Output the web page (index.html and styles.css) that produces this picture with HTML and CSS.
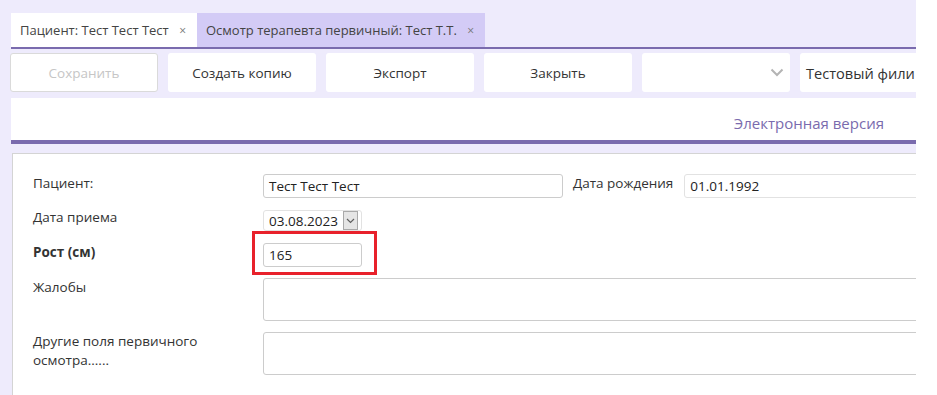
FILE: index.html
```html
<!DOCTYPE html>
<html lang="ru">
<head>
<meta charset="utf-8">
<title>Осмотр терапевта</title>
<link rel="stylesheet" href="styles.css">
</head>
<body>
<div class="app">
  <div class="tabs">
    <div class="tab tab-active"><span class="tab-title">Пациент: Тест Тест Тест</span><span class="tab-x">×</span></div>
    <div class="tab tab-current"><span class="tab-title">Осмотр терапевта первичный: Тест Т.Т.</span><span class="tab-x">×</span></div>
  </div>
  <div class="toolbar">
    <div class="btn btn-disabled">Сохранить</div>
    <div class="btn">Создать копию</div>
    <div class="btn">Экспорт</div>
    <div class="btn">Закрыть</div>
    <div class="btn btn-select">
      <svg class="chev" width="14" height="9" viewBox="0 0 14 9"><path d="M1.5 1.5 L7 7 L12.5 1.5" fill="none" stroke="#b4b4b4" stroke-width="2"/></svg>
    </div>
    <div class="btn btn-branch">Тестовый фили</div>
  </div>
  <div class="header"><span class="header-title">Электронная версия</span></div>
  <div class="form">
    <div class="row">
      <div class="label">Пациент:</div>
      <div class="input input-name">Тест Тест Тест</div>
      <div class="label label-inline">Дата рождения</div>
      <div class="input input-birth">01.01.1992</div>
    </div>
    <div class="row row-date">
      <div class="label">Дата приема</div>
      <div class="input input-date">
        <span>03.08.2023</span>
        <span class="date-btn"><svg width="9" height="6" viewBox="0 0 9 6"><path d="M1 1 L4.5 4.5 L8 1" fill="none" stroke="#606060" stroke-width="1.2"/></svg></span>
      </div>
    </div>
    <div class="row row-height">
      <div class="label label-bold">Рост (см)</div>
      <div class="mark-wrap">
        <div class="input input-height">165</div>
        <div class="mark"></div>
      </div>
    </div>
    <div class="row row-area">
      <div class="label">Жалобы</div>
      <div class="textarea"></div>
    </div>
    <div class="row row-area">
      <div class="label">Другие поля первичного осмотра......</div>
      <div class="textarea"></div>
    </div>
  </div>
</div>
</body>
</html>
```
FILE: styles.css
```css
html, body {
  margin: 0;
  padding: 0;
  background: #ffffff;
}
body {
  font-family: "Open Sans", "Noto Sans", sans-serif;
  font-size: 13px;
  color: #333333;
}
.app {
  width: 916px;
  height: 395px;
  overflow: hidden;
  background: #eeebfc;
  padding-left: 10px;
  padding-top: 13px;
  box-sizing: border-box;
}
.tabs {
  display: flex;
  margin-left: 1px;
  height: 34px;
  border-bottom: 2px solid #7a6bae;
  width: 2000px;
}
.tab {
  display: flex;
  align-items: center;
  padding-left: 9px;
  padding-right: 11px;
  color: #444444;
  font-size: 13px;
}
.tab-active {
  background: #ffffff;
  width: 186px;
  box-sizing: border-box;
}
.tab-current {
  background: #d3cbf6;
  width: 288px;
  box-sizing: border-box;
}
.tab-title {
  flex: 1;
  white-space: nowrap;
}
.tab-x {
  color: #777777;
  font-size: 12px;
}
.toolbar {
  display: flex;
  gap: 10px;
  margin-top: 4px;
  width: 2000px;
}
.btn {
  flex: 0 0 auto;
  width: 148px;
  height: 39px;
  box-sizing: border-box;
  background: #ffffff;
  border-radius: 3px;
  display: flex;
  align-items: center;
  justify-content: center;
  color: #333333;
  font-size: 13.5px;
}
.btn-disabled {
  border: 1px solid #dadada;
  color: #c6c6c6;
}
.btn-select {
  justify-content: flex-end;
  padding-right: 6px;
}
.btn-branch {
  justify-content: flex-start;
  padding-left: 6px;
  width: 200px;
  font-size: 14.6px;
  color: #333333;
  white-space: nowrap;
}
.header {
  margin-top: 6px;
  margin-left: 1px;
  height: 46px;
  width: 905px;
  box-sizing: border-box;
  background: #ffffff;
  border-bottom: 4px solid #7a6bae;
  display: flex;
  justify-content: flex-end;
  align-items: flex-end;
  padding-right: 32px;
  padding-bottom: 7px;
}
.header-title {
  color: #7a6bae;
  font-size: 15px;
}
.form {
  margin-top: 9px;
  margin-left: 2px;
  width: 1000px;
  height: 400px;
  background: #ffffff;
  border: 1px solid #d4d4d4;
  border-right: none;
  padding: 20px 0 0 20px;
  box-sizing: border-box;
}
.row {
  display: flex;
  align-items: flex-start;
  margin-bottom: 12px;
}
.row-height {
  margin-bottom: 11px;
}
.row-area {
  margin-bottom: 11px;
}
.label {
  width: 230px;
  flex: 0 0 230px;
  line-height: 19px;
  color: #333333;
  font-size: 13.5px;
}
.row-date .label {
  margin-top: -2px;
}
.label-bold {
  font-weight: bold;
}
.label-inline {
  width: auto;
  flex: 0 0 auto;
  margin-left: 10px;
  margin-right: 11px;
}
.input {
  height: 24px;
  box-sizing: border-box;
  border: 1px solid #cccccc;
  border-radius: 3px;
  padding-left: 5px;
  display: flex;
  align-items: center;
  font-size: 13.5px;
  color: #222222;
  white-space: nowrap;
}
.input-name {
  width: 300px;
}
.input-birth {
  width: 300px;
  border-color: #e2e2e2;
}
.input-date {
  width: 99px;
  height: 21px;
  border-color: #e2e2e2;
  padding-right: 3px;
  justify-content: space-between;
}
.date-btn {
  width: 15px;
  height: 19px;
  box-sizing: border-box;
  background: #e5e5e5;
  border: 1px solid #a9a9a9;
  display: flex;
  align-items: center;
  justify-content: center;
}
.mark-wrap {
  position: relative;
}
.input-height {
  width: 99px;
}
.mark {
  position: absolute;
  left: -11px;
  top: -12px;
  width: 125px;
  height: 44px;
  box-sizing: border-box;
  border: 3px solid #e8212b;
}
.textarea {
  width: 700px;
  height: 43px;
  box-sizing: border-box;
  border: 1px solid #cccccc;
  border-radius: 3px;
}
```
